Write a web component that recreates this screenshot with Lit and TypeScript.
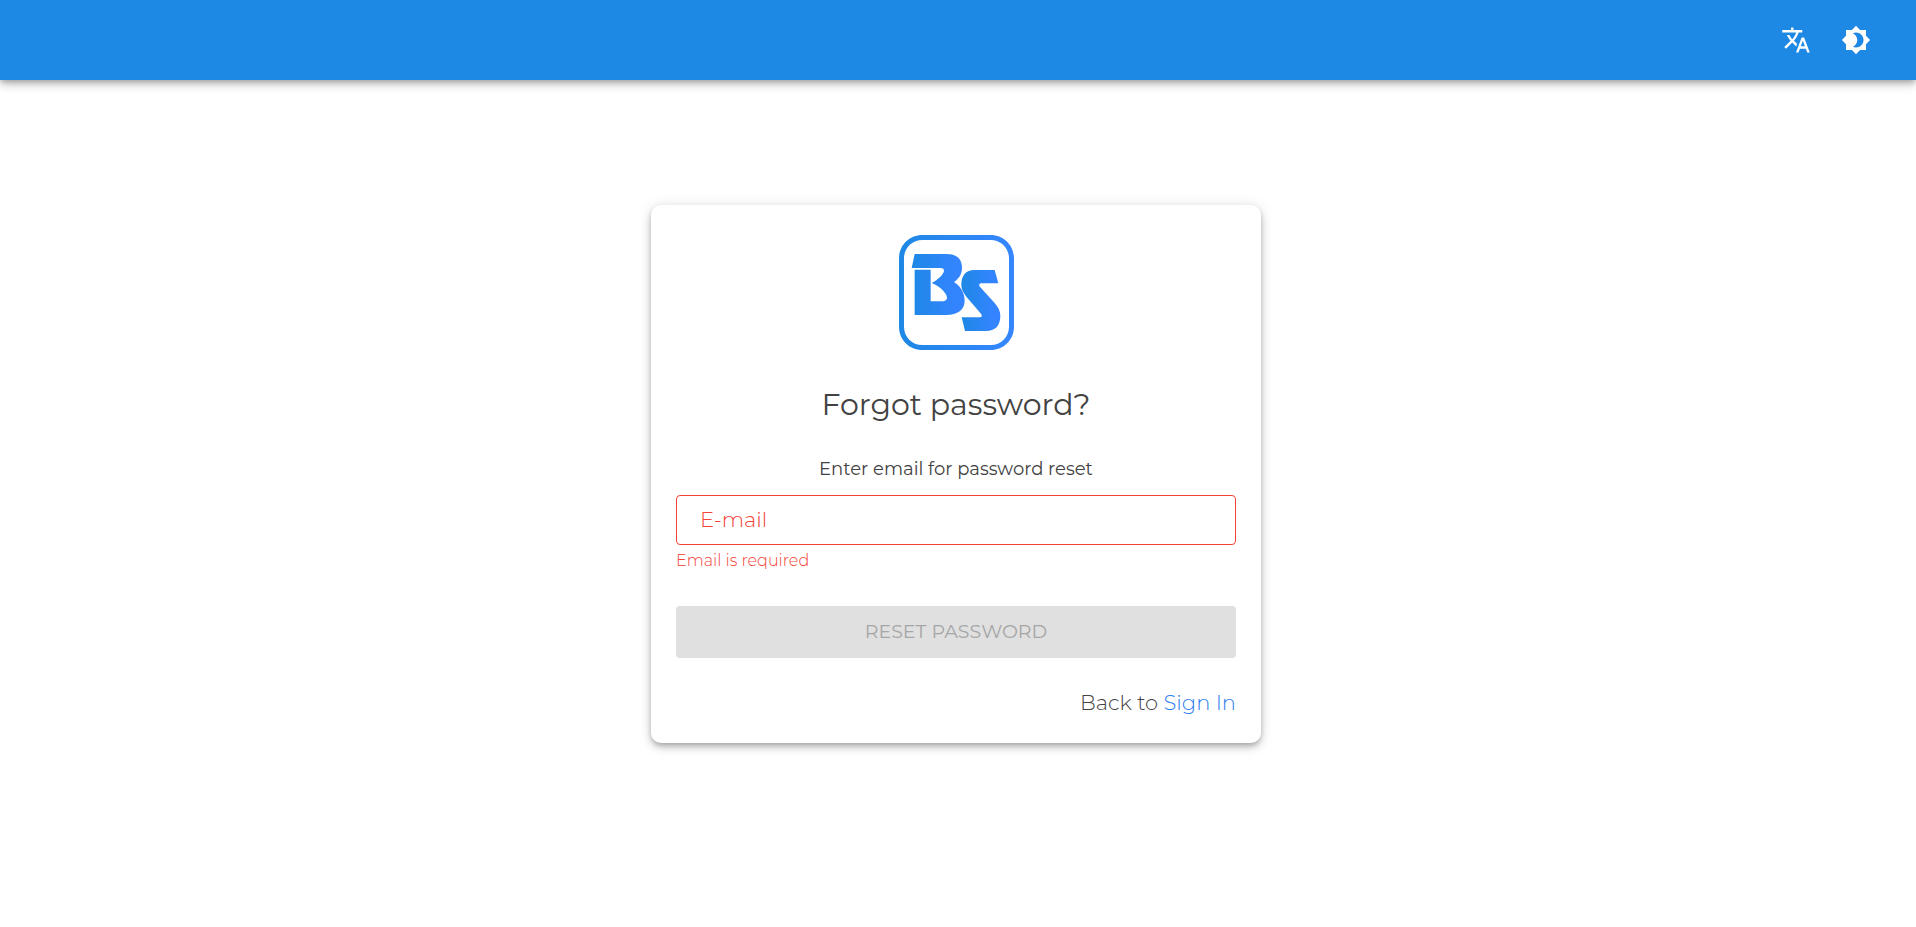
import { LitElement, html, css } from "lit";
import { customElement, state } from "lit/decorators.js";

@customElement("app-logo")
export class AppLogo extends LitElement {
  static styles = css`
    :host {
      display: block;
    }
    .mark {
      display: block;
      width: 115px;
      height: 115px;
    }
  `;

  render() {
    return html`
      <svg class="mark" viewBox="24 30 345 345" role="img" aria-label="BS">
        <defs>
          <linearGradient id="frame" x1="0" x2="1" y1="0" y2="0">
            <stop offset="0" stop-color="#1e88e5" />
            <stop offset="1" stop-color="#3686ff" />
          </linearGradient>
          <linearGradient id="shape" x1="0" x2="1" y1="0" y2="0">
            <stop offset="0" stop-color="#1e88e5" />
            <stop offset="0.85" stop-color="#3484ff" />
          </linearGradient>
        </defs>
        <path
          fill="url(#frame)"
          fill-rule="evenodd"
          d="M94 30H299C338 30 369 61 369 100V305C369 344 338 375 299 375H94C55 375 24 344 24 305V100C24 61 55 30 94 30ZM94 45C63 45 39 69 39 100V305C39 336 63 360 94 360H299C330 360 354 336 354 305V100C354 69 330 45 299 45Z"
        />
        <path
          fill="url(#shape)"
          d="M71 87H168C199 87 213 103 213 128C213 149 202 162 189 171C209 184 221 203 221 228C221 254 200 270 166 270H71V134H119V229H150C162 229 168 225 168 218C168 204 144 182 122 174C141 164 159 147 159 137C159 131 155 129 148 129H62Z"
        />
        <path
          fill="url(#shape)"
          d="M311 135H250C224 135 211 152 211 180C211 193 217 203 226 215L268 264C275 272 274 277 264 277H212L222 318H284C313 318 328 302 328 272C328 258 321 246 311 234L268 187C262 180 264 175 273 175H322Z"
        />
      </svg>
    `;
  }
}

@customElement("app-toolbar")
export class AppToolbar extends LitElement {
  static styles = css`
    :host {
      display: block;
    }
    .bar {
      display: flex;
      align-items: center;
      justify-content: flex-end;
      gap: 20px;
      height: 80px;
      padding: 0 40px;
      box-sizing: border-box;
      background: #1e88e5;
      box-shadow: 0 3px 5px -1px rgba(0, 0, 0, 0.2),
        0 5px 8px rgba(0, 0, 0, 0.14), 0 1px 14px rgba(0, 0, 0, 0.12);
    }
    .action {
      display: grid;
      place-items: center;
      width: 40px;
      height: 40px;
      padding: 0;
      border: 0;
      border-radius: 50%;
      background: none;
      color: #fff;
      cursor: pointer;
    }
    .icon {
      width: 30px;
      height: 30px;
      fill: currentColor;
    }
  `;

  render() {
    return html`
      <header class="bar">
        <button class="action" type="button" aria-label="Language">
          <svg class="icon" viewBox="0 0 24 24" aria-hidden="true">
            <path
              d="M12.87 15.07l-2.54-2.51.03-.03c1.74-1.94 2.98-4.17 3.71-6.53H17V4h-7V2H8v2H1v1.99h11.17C11.5 7.92 10.44 9.75 9 11.35 8.07 10.32 7.3 9.19 6.69 8h-2c.73 1.63 1.73 3.17 2.98 4.56l-5.09 5.02L4 19l5-5 3.11 3.11.76-2.04zM18.5 10h-2L12 22h2l1.12-3h4.75L21 22h2l-4.5-12zm-2.62 7l1.62-4.33L19.12 17h-3.24z"
            />
          </svg>
        </button>
        <button class="action" type="button" aria-label="Theme">
          <svg class="icon" viewBox="0 0 24 24" aria-hidden="true">
            <path
              d="M20 8.69V4h-4.69L12 .69 8.69 4H4v4.69L.69 12 4 15.31V20h4.69L12 23.31 15.31 20H20v-4.69L23.31 12 20 8.69zM12 18c-.89 0-1.74-.2-2.5-.55C11.56 16.5 13 14.42 13 12s-1.44-4.5-3.5-5.45C10.26 6.2 11.11 6 12 6c3.31 0 6 2.69 6 6s-2.69 6-6 6z"
            />
          </svg>
        </button>
      </header>
    `;
  }
}

@customElement("app-root")
export class AppRoot extends LitElement {
  @state() private email = "";

  static styles = css`
    :host {
      display: block;
      min-height: 100vh;
      background: #fff;
      color: #424242;
      font-family: Montserrat, Inter, "Open Sans", sans-serif;
      font-weight: 300;
    }
    .page {
      display: flex;
      justify-content: center;
      padding: 125px 4px 40px 0;
    }
    .card {
      display: flex;
      flex-direction: column;
      width: 100%;
      max-width: 610px;
      box-sizing: border-box;
      padding: 30px 25px 28px;
      border-radius: 10px;
      background: #fff;
      box-shadow: 0 3px 5px -1px rgba(0, 0, 0, 0.2),
        0 5px 8px rgba(0, 0, 0, 0.14), 0 1px 14px rgba(0, 0, 0, 0.12);
    }
    .logo {
      align-self: center;
    }
    .title {
      margin: 35px 0 0;
      font-size: 30px;
      line-height: 40px;
      font-weight: 400;
      text-align: center;
    }
    .hint {
      margin: 32px 0 0;
      font-size: 18px;
      line-height: 24px;
      font-weight: 400;
      text-align: center;
    }
    .field {
      display: grid;
      margin-top: 14px;
    }
    .input,
    .label {
      grid-area: 1 / 1;
      font-size: 21px;
      line-height: 24px;
    }
    .input {
      width: 100%;
      height: 50px;
      box-sizing: border-box;
      padding: 0 24px;
      border: 1px solid #f44336;
      border-radius: 4px;
      outline: 0;
      background: none;
      color: inherit;
      font-family: inherit;
      font-weight: inherit;
    }
    .label {
      align-self: center;
      padding-left: 24px;
      color: #f44336;
      pointer-events: none;
    }
    .input:not(:placeholder-shown) + .label {
      visibility: hidden;
    }
    .error {
      min-height: 24px;
      margin: 4px 0 0;
      font-size: 16px;
      line-height: 24px;
      color: #f44336;
    }
    .submit {
      height: 52px;
      margin-top: 33px;
      padding: 0 16px;
      border: 0;
      border-radius: 4px;
      background: #1e88e5;
      color: #fff;
      font-family: inherit;
      font-size: 19px;
      line-height: 24px;
      font-weight: 400;
      text-transform: uppercase;
    }
    .submit:disabled {
      background: #e0e0e0;
      color: #a6a6a6;
    }
    .back {
      margin: 33px 0 0;
      font-size: 21px;
      line-height: 24px;
      text-align: right;
    }
    .link {
      color: #2f80ed;
      text-decoration: none;
    }
  `;

  private onInput(event: Event) {
    this.email = (event.target as HTMLInputElement).value;
  }

  render() {
    const missing = this.email.trim() === "";
    return html`
      <app-toolbar></app-toolbar>
      <main class="page">
        <form class="card" novalidate>
          <app-logo class="logo"></app-logo>
          <h1 class="title">Forgot password?</h1>
          <p class="hint">Enter email for password reset</p>
          <div class="field">
            <input
              class="input"
              id="email"
              type="email"
              placeholder=" "
              aria-describedby="email-error"
              .value=${this.email}
              @input=${this.onInput}
            />
            <label class="label" for="email">E-mail</label>
          </div>
          <p class="error" id="email-error">${missing ? "Email is required" : ""}</p>
          <button class="submit" type="submit" ?disabled=${missing}>Reset password</button>
          <p class="back">Back to <a class="link" href="#sign-in">Sign In</a></p>
        </form>
      </main>
    `;
  }
}
